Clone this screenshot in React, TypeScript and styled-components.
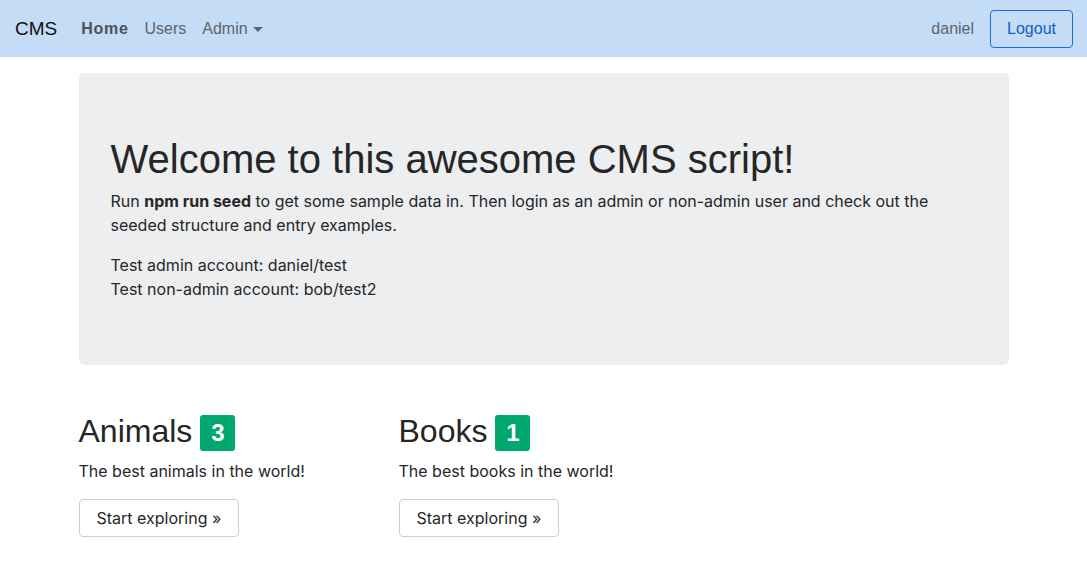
import styled, { createGlobalStyle } from "styled-components";

const GlobalStyle = createGlobalStyle`
    body {
        margin: 0;
        font-family: Inter, "Liberation Sans", Arial, sans-serif;
        font-size: 16px;
        line-height: 1.5;
        color: #212529;
        background: #fff;
    }
    * { box-sizing: border-box; }
`;

type NavLinkProps = {
    $active?: boolean;
}

type Category = {
    name: string;
    count: number;
    description: string;
}

const categories: Category[] = [
    { name: "Animals", count: 3, description: "The best animals in the world!" },
    { name: "Books", count: 1, description: "The best books in the world!" },
];

const App = () => {
    return (
        <>
            <GlobalStyle />
            <Navbar>
                <Brand>CMS</Brand>
                <NavLinks>
                    <NavLink $active>Home</NavLink>
                    <NavLink>Users</NavLink>
                    <NavLink>
                        Admin<Caret />
                    </NavLink>
                </NavLinks>
                <NavRight>
                    <UserName>daniel</UserName>
                    <LogoutButton>Logout</LogoutButton>
                </NavRight>
            </Navbar>
            <Container>
                <Jumbotron>
                    <Heading>Welcome to this awesome CMS script!</Heading>
                    <Lead>
                        Run <strong>npm run seed</strong> to get some sample data in. Then login as an admin or non-admin
                        user and check out the seeded structure and entry examples.
                    </Lead>
                    <Lead $last>
                        Test admin account: daniel/test
                        <br />
                        Test non-admin account: bob/test2
                    </Lead>
                </Jumbotron>
                <Row>
                    {categories.map(cat => (
                        <Column key={cat.name}>
                            <CategoryTitle>
                                {cat.name} <Badge>{cat.count}</Badge>
                            </CategoryTitle>
                            <CategoryText>{cat.description}</CategoryText>
                            <ExploreButton>Start exploring &raquo;</ExploreButton>
                        </Column>
                    ))}
                </Row>
            </Container>
        </>
    );
}

const Navbar = styled.nav`
    display: flex;
    align-items: center;
    height: 57px;
    padding: 0 14px 0 15px;
    background-color: #c5dcf7;
    font-family: "Liberation Sans", Arial, sans-serif;
`

const Brand = styled.a`
    font-size: 19px;
    color: #111;
    margin-right: 24px;
    line-height: 1;
`

const NavLinks = styled.div`
    display: flex;
    align-items: center;
    gap: 16px;
    flex: 1;
`

const NavLink = styled.a<NavLinkProps>`
    display: flex;
    align-items: center;
    font-size: 16px;
    color: ${props => props.$active ? "#4d5257" : "#5f6469"};
    font-weight: ${props => props.$active ? 700 : 400};
    letter-spacing: ${props => props.$active ? "0.7px" : "0"};
`

const Caret = styled.span`
    display: inline-block;
    margin-left: 5px;
    margin-top: 2px;
    border-top: 5px solid #5f6469;
    border-left: 5px solid transparent;
    border-right: 5px solid transparent;
`

const NavRight = styled.div`
    display: flex;
    align-items: center;
    gap: 16px;
`

const UserName = styled.span`
    color: #5f6469;
`

const LogoutButton = styled.button`
    font-family: inherit;
    font-size: 16px;
    height: 38px;
    padding: 0 16px;
    color: #0d5ec7;
    background: transparent;
    border: 1px solid #1d6fd8;
    border-radius: 4px;
`

const Container = styled.div`
    width: 960px;
    margin: 0 auto;
    padding: 16px 15px 0;
`

const Jumbotron = styled.div`
    background-color: #eceef0;
    border-radius: 5px;
    padding: 64px 32px;
    margin-bottom: 46px;
`

const Heading = styled.h1`
    margin: 0 0 8px;
    font-family: "Liberation Sans", Arial, sans-serif;
    font-size: 40px;
    font-weight: 500;
    line-height: 1.1;
    color: #262626;
`

const Lead = styled.p<{ $last?: boolean }>`
    margin: 0 0 ${props => props.$last ? "0" : "16px"};
    color: #262626;
`

const Row = styled.div`
    display: flex;
`

const Column = styled.div`
    width: 320px;
`

const CategoryTitle = styled.h2`
    display: flex;
    align-items: center;
    gap: 8px;
    margin: 0 0 8px;
    font-family: "Liberation Sans", Arial, sans-serif;
    font-size: 32px;
    font-weight: 500;
    line-height: 1.2;
    color: #262626;
`

const Badge = styled.span`
    display: inline-flex;
    align-items: center;
    justify-content: center;
    min-width: 35px;
    height: 36px;
    margin-top: 4px;
    padding: 0 8px;
    font-size: 24px;
    font-weight: 700;
    color: #fff;
    background-color: #00a870;
    border-radius: 3px;
`

const CategoryText = styled.p`
    margin: 0 0 16px;
    color: #262626;
`

const ExploreButton = styled.button`
    font-family: inherit;
    font-size: 16px;
    height: 38px;
    padding: 0 17px;
    color: #262626;
    background: #fff;
    border: 1px solid #cfcfcf;
    border-radius: 4px;
`

export default App;
